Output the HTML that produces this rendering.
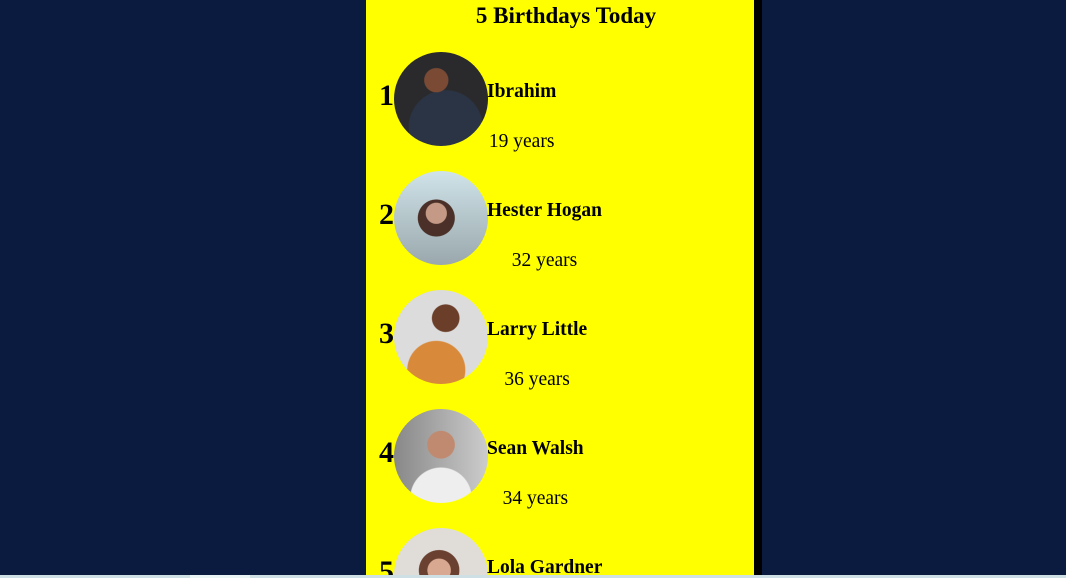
<!DOCTYPE html>
<html><head><style>
html,body{margin:0;padding:0;width:1066px;height:578px;overflow:hidden;background:#0b1a3f;font-family:"Liberation Serif",serif;}
#w{position:relative;width:1066px;height:578px;overflow:hidden;}
.panel{position:absolute;left:366px;top:0;width:388px;height:578px;background:#ff0;}
.bar{position:absolute;left:754px;top:0;width:8px;height:578px;background:#000;}
.bottom{position:absolute;left:0;top:575px;width:1066px;height:3px;background:#cfe0e4;}
.bottom i{position:absolute;left:190px;top:0;width:60px;height:3px;background:#eaf4f4;}
h1{position:absolute;left:366px;width:400px;top:3px;margin:0;text-align:center;font-size:23px;font-weight:bold;}
.row{position:absolute;left:366px;height:94px;}
.num{position:absolute;left:13px;top:27px;font-size:30px;font-weight:bold;}
.av{position:absolute;left:28px;top:0;width:94px;height:94px;border-radius:50%;}
.info{position:absolute;left:121px;top:29px;text-align:center;white-space:nowrap;}
.name{font-weight:bold;font-size:19.5px;line-height:22px;}
.yrs{font-size:19.5px;line-height:22px;margin-top:28px;}
</style></head><body><div id="w">
<div class="panel"></div><div class="bar"></div>
<h1>5 Birthdays Today</h1>
<div class="row" style="top:52px"><div class="num">1</div><div class="av" style="background:radial-gradient(circle at 45% 30%,#7a4a35 0 14%,transparent 15%),radial-gradient(circle at 55% 80%,#2a3445 0 40%,transparent 41%),#2a2a2c"></div><div class="info"><div class="name">Ibrahim</div><div class="yrs">19 years</div></div></div>
<div class="row" style="top:171px"><div class="num">2</div><div class="av" style="background:radial-gradient(circle at 45% 45%,#c49a86 0 14%,transparent 15%),radial-gradient(circle at 45% 50%,#4a3028 0 26%,transparent 27%),linear-gradient(#cfe3e8,#9aa8ad)"></div><div class="info"><div class="name">Hester Hogan</div><div class="yrs">32 years</div></div></div>
<div class="row" style="top:290px"><div class="num">3</div><div class="av" style="background:radial-gradient(circle at 55% 30%,#6b3e2a 0 16%,transparent 17%),radial-gradient(circle at 45% 85%,#d9893a 0 30%,transparent 31%),#dcdcdc"></div><div class="info"><div class="name">Larry Little</div><div class="yrs">36 years</div></div></div>
<div class="row" style="top:409px"><div class="num">4</div><div class="av" style="background:radial-gradient(circle at 50% 38%,#c08a70 0 18%,transparent 19%),radial-gradient(circle at 50% 95%,#eee 0 30%,transparent 31%),linear-gradient(90deg,#888,#ccc)"></div><div class="info"><div class="name">Sean Walsh</div><div class="yrs">34 years</div></div></div>
<div class="row" style="top:528px"><div class="num">5</div><div class="av" style="background:radial-gradient(circle at 48% 45%,#d8a890 0 16%,transparent 17%),radial-gradient(circle at 48% 45%,#6a4030 0 28%,transparent 29%),#e0ddd8"></div><div class="info"><div class="name">Lola Gardner</div><div class="yrs">30 years</div></div></div>
<div class="bottom"><i></i></div>
</div></body></html>
